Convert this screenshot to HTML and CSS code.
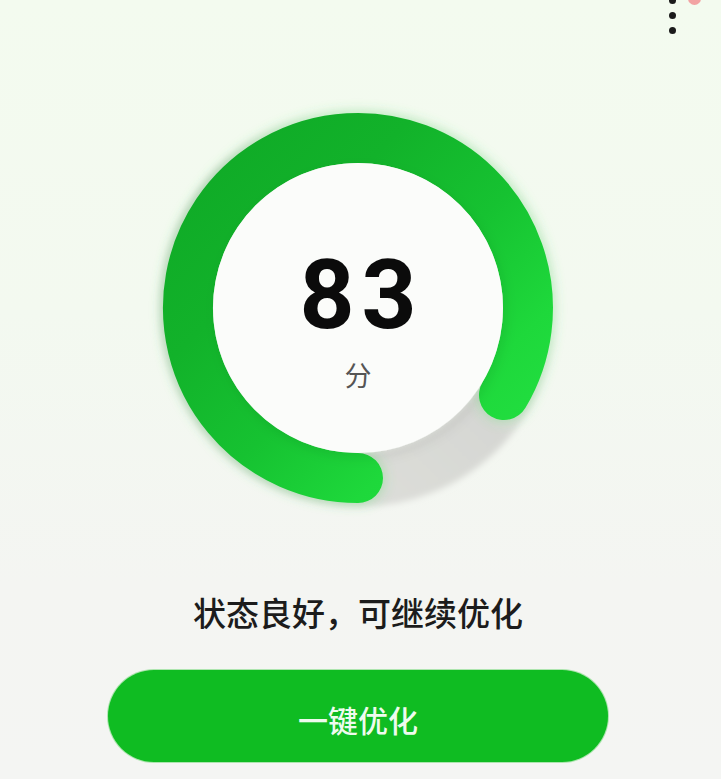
FILE: index.html
```html
<!DOCTYPE html>
<html lang="zh-CN">
<head>
<meta charset="utf-8">
<title>一键优化</title>
<link rel="stylesheet" href="styles.css">
</head>
<body>
<div class="page">
  <div class="menu" aria-label="更多">
    <span class="dot"></span>
    <span class="dot"></span>
    <span class="dot"></span>
  </div>
  <span class="badge"></span>

  <main class="main">
    <div class="gauge">
      <svg class="ring" viewBox="0 0 400 400" width="400" height="400">
        <defs>
          <linearGradient id="g" gradientUnits="userSpaceOnUse" x1="30" y1="30" x2="370" y2="370">
            <stop offset="0" stop-color="#0fa926"/>
            <stop offset="0.3" stop-color="#12b22a"/>
            <stop offset="0.55" stop-color="#16c231"/>
            <stop offset="0.78" stop-color="#1ed83b"/>
            <stop offset="1" stop-color="#23e142"/>
          </linearGradient>
          <linearGradient id="t" gradientUnits="userSpaceOnUse" x1="370" y1="200" x2="200" y2="380">
            <stop offset="0" stop-color="#e4e6e1" stop-opacity="0.35"/>
            <stop offset="0.45" stop-color="#d6d7d3"/>
            <stop offset="1" stop-color="#dcddd9"/>
          </linearGradient>
          <filter id="glow" x="-20%" y="-20%" width="140%" height="140%">
            <feGaussianBlur stdDeviation="6"/>
          </filter>
          <filter id="soft" x="-20%" y="-20%" width="140%" height="140%">
            <feGaussianBlur stdDeviation="3"/>
          </filter>
          <filter id="shadow" x="-20%" y="-20%" width="140%" height="140%">
            <feDropShadow dx="3" dy="5" stdDeviation="6" flood-color="#000" flood-opacity="0.08"/>
          </filter>
        </defs>
        <circle cx="200" cy="200" r="172" fill="none" stroke="url(#t)" stroke-width="54" filter="url(#soft)"/>
        <path class="halo" d="M200 370 A170 170 0 1 1 346 287" fill="none" stroke="#45dc5c" stroke-opacity="0.3"
              stroke-width="54" stroke-linecap="round" filter="url(#glow)"/>
        <path d="M200 370 A170 170 0 1 1 346 287" fill="none" stroke="url(#g)"
              stroke-width="50" stroke-linecap="round"/>
        <circle cx="200" cy="200" r="145" fill="#fbfcfa" filter="url(#shadow)"/>
      </svg>
      <div class="score">
        <span class="num">83</span>
        <span class="unit">分</span>
      </div>
    </div>

    <p class="status">状态良好，可继续优化</p>

    <button class="cta" type="button">一键优化</button>
  </main>
</div>
</body>
</html>
```

FILE: styles.css
```css
* { box-sizing: border-box; }

html, body {
  margin: 0;
  padding: 0;
}

body {
  width: 721px;
  height: 779px;
  overflow: hidden;
  font-family: "Noto Sans CJK SC", "Noto Sans", sans-serif;
  background: linear-gradient(180deg, #f3fbef 0%, #f3f9f0 40%, #f4f5f2 75%, #f4f5f3 100%);
}

.page {
  position: relative;
  width: 721px;
  height: 779px;
}

.menu {
  position: absolute;
  left: 669px;
  top: -3px;
  display: flex;
  flex-direction: column;
  gap: 8px;
}

.dot {
  width: 7px;
  height: 7px;
  border-radius: 50%;
  background: #1b1b1b;
}

.badge {
  position: absolute;
  left: 688px;
  top: -8px;
  width: 13px;
  height: 13px;
  border-radius: 50%;
  background: #f2a3a3;
}

.main {
  display: flex;
  flex-direction: column;
  align-items: center;
  padding: 108px 5px 0 0;
}

.gauge {
  display: grid;
  width: 400px;
  height: 400px;
}

.ring {
  grid-area: 1 / 1;
  display: block;
  overflow: visible;
}

.score {
  grid-area: 1 / 1;
  display: flex;
  flex-direction: column;
  align-items: center;
  padding-top: 139px;
}

.num {
  font-family: Roboto, "Noto Sans", sans-serif;
  font-weight: 700;
  font-size: 96px;
  line-height: 1;
  letter-spacing: 7px;
  margin-right: -7px;
  color: #0b0b0b;
}

.unit {
  margin-top: 18px;
  font-size: 27px;
  line-height: 1;
  color: #555;
}

.status {
  margin: 88px 0 0;
  font-size: 33px;
  line-height: 1;
  font-weight: 500;
  color: #1c1c1c;
}

.cta {
  margin-top: 41px;
  width: 500px;
  height: 92px;
  border: none;
  border-radius: 46px;
  background: #0fbc22;
  box-shadow: 0 0 0 1px rgba(40, 200, 50, 0.35);
  color: #eefbee;
  font-family: "Noto Sans CJK SC", "Noto Sans", sans-serif;
  font-size: 30px;
  font-weight: 500;
  line-height: 1;
  padding: 6px 0 0;
  display: flex;
  align-items: center;
  justify-content: center;
}
```
